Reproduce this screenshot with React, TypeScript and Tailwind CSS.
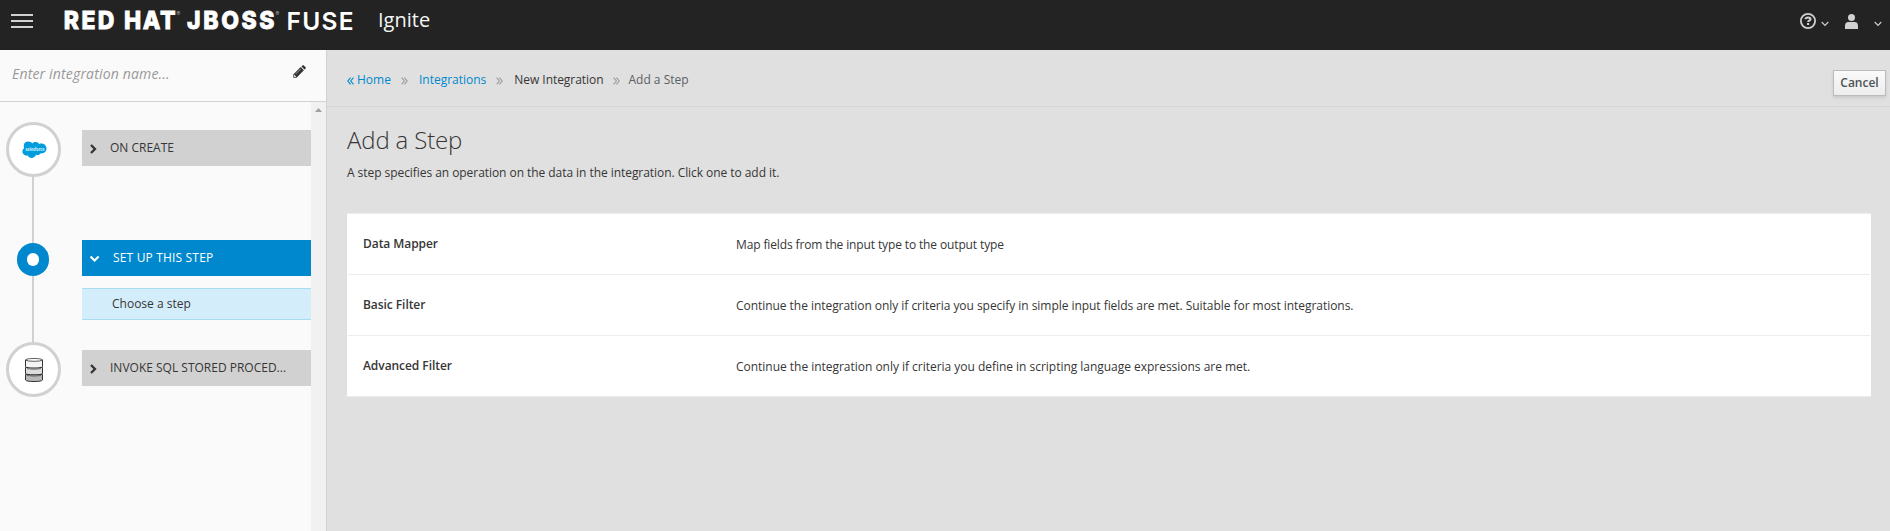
import type { ReactNode } from "react";

function Logo() {
  return (
    <svg className="block overflow-visible" width="300" height="36" viewBox="0 0 300 36" fontFamily="Inter, sans-serif" fill="#fff">
      <g fontSize="25" fontWeight="800" stroke="#fff" strokeWidth="0.8" transform="scale(0.92 1)">
        <text x="2" y="29.5" textLength="55" lengthAdjust="spacing">RED</text>
        <text x="67.5" y="29.5" textLength="56" lengthAdjust="spacing">HAT</text>
        <text x="136" y="29.5" textLength="95" lengthAdjust="spacing">JBOSS</text>
      </g>
      <text x="224.5" y="29.5" fontSize="24.5" fontWeight="600" textLength="67" lengthAdjust="spacing">FUSE</text>
      <text x="114.500" y="15.500" fontSize="5.5" fill="#aaa">®</text>
      <text x="213.500" y="15.500" fontSize="5.5" fill="#aaa">®</text>
    </svg>
  );
}

function Chevron({ className = "", size = "small" }: { className?: string; size?: string }) {
  return size === "small" ? (
    <svg className={className} width="8" height="6" viewBox="0 0 8 6" fill="none" stroke="#d1d1d1" strokeWidth="1.1">
      <path d="M.7 1 4 4.4 7.3 1" />
    </svg>
  ) : (
    <svg className={className} width="8" height="10" viewBox="0 0 8 10" fill="none" stroke="#333" strokeWidth="2.3">
      <path d="M1 1 5 5 1 9" />
    </svg>
  );
}

function DoubleAngle({ back = false, className = "" }: { back?: boolean; className?: string }) {
  return (
    <svg className={className} width="7" height="8" viewBox="0 0 7 8" fill="none" stroke={back ? "#0088ce" : "#9c9c9c"} strokeWidth="1.1">
      {back ? <path d="M3.6.7.8 4l2.8 3.3M6.5.7 3.7 4l2.8 3.3" /> : <path d="M.6.7 3.4 4 .6 7.3M3.4.7 6.2 4 3.4 7.3" />}
    </svg>
  );
}

function Node({ children }: { children: ReactNode }) {
  return (
    <div className="ml-1.5 flex h-[55px] w-[55px] shrink-0 items-center justify-center rounded-full border-3 border-[#d1d1d1] bg-white">
      {children}
    </div>
  );
}

function StepBar({ children }: { children: ReactNode }) {
  return (
    <div className="flex h-9 items-center bg-[#d1d1d1] pl-2">
      <Chevron size="large" className="mt-px" />
      <span className="ml-3 whitespace-nowrap pb-px">{children}</span>
    </div>
  );
}

const steps = [
  { name: "Data Mapper", text: "Map fields from the input type to the output type", tracking: "tracking-[-0.13px]" },
  {
    name: "Basic Filter",
    text: "Continue the integration only if criteria you specify in simple input fields are met. Suitable for most integrations.",
    tracking: "tracking-[-0.046px]",
  },
  {
    name: "Advanced Filter",
    text: "Continue the integration only if criteria you define in scripting language expressions are met.",
    tracking: "tracking-[-0.025px]",
  },
];

export default function App() {
  return (
    <div className="flex h-[531px] w-full flex-col overflow-hidden bg-[#e0e0e0] font-['Open_Sans',sans-serif] text-xs text-[#363636]">
      <header className="flex h-[50px] shrink-0 items-start bg-[#232323]">
        <button className="ml-[11px] mt-3.5 flex h-3.5 w-[22px] flex-col justify-between" aria-label="Menu">
          <span className="h-0.5 w-full bg-[#d1d1d1]" />
          <span className="h-0.5 w-full bg-[#d1d1d1]" />
          <span className="h-0.5 w-full bg-[#d1d1d1]" />
        </button>
        <div className="ml-[29px] w-[300px]"><Logo /></div>
        <span className="ml-4 mt-[6px] text-[20px] leading-7 text-[#f5f5f5]">Ignite</span>
        <div className="ml-auto mr-2 flex items-start">
          <svg className="mt-[13px]" width="16" height="16" viewBox="0 0 16 16" fill="none" stroke="#d1d1d1">
            <circle cx="8" cy="8" r="7.1" strokeWidth="1.8" />
            <path d="M5.4 6.200C5.600 4.900 6.600 4.400 8 4.400c1.500 0 2.500.7 2.500 1.800 0 1.500-2.400 1.400-2.400 2.900" strokeWidth="2" />
            <path d="M8.100 10v2" strokeWidth="2.100" />
          </svg>
          <Chevron className="ml-[5px] mt-[21px]" />
          <svg className="ml-4 mt-3.5" width="13" height="15" viewBox="0 0 13 15" fill="#d1d1d1">
            <circle cx="6.5" cy="3.6" r="3.5" />
            <path d="M0 15v-3c0-2.700 1.300-4 3.300-4h6.400c2 0 3.300 1.300 3.300 4v3z" />
          </svg>
          <Chevron className="ml-4 mt-[21px]" />
        </div>
      </header>

      <div className="flex min-h-0 grow">
        <aside className="flex w-[327px] shrink-0 flex-col border-r border-[#d1d1d1] bg-[#fafafa]">
          <div className="flex h-[52px] shrink-0 items-start justify-between border-b border-[#d1d1d1] pl-3 pr-5">
            <span className="mt-3.5 text-sm leading-5 tracking-[0.17px] italic text-[#999]">Enter integration name...</span>
            <svg className="mt-[15px]" width="13" height="13" viewBox="0 0 13 13" fill="#333">
              <path d="M.3 12.700V9.500L7.700 2.100l3.200 3.200-7.400 7.400zM8.400 1.400 9.400.4q.7-.6 1.400 0l1.800 1.800q.6.7 0 1.400l-1 1z" />
              <path d="M1.300 10v1.700H3zM2.700 9l5-5" stroke="#fafafa" strokeWidth=".5" fill="#fafafa" />
            </svg>
          </div>
          <div className="flex min-h-0 grow">
            <div className="flex w-[82px] shrink-0 flex-col items-start pt-5">
              <Node>
                <svg width="25" height="18" viewBox="0 0 25 18" className="ml-px overflow-visible">
                  <path
                    d="M1.800 4.500C1.800 1.800 4 .5 6.200.5c1.800 0 3.200.7 4.200 1.900C11.500 1.300 12.600.9 13.800 1c1.600.1 2.700.9 3.300 2 3.400-1.300 7.400.9 7.400 4.600 0 3.500-3.200 5.500-6.200 4.800-.9 1.600-2.700 2-4.200 1.400-.7 2-2.600 3.200-4.600 3.200-1.700 0-3-.8-3.800-2.400C3.200 15.100.4 13.500.4 10.600.4 9.100 1.100 7.900 2.100 7.200 1.800 6.300 1.700 5.400 1.800 4.500Z"
                    fill="#009ddc"
                  />
                  <text x="3.500" y="10" fontSize="5" fontWeight="700" fill="#d7f1fb" textLength="19" lengthAdjust="spacingAndGlyphs">salesforce</text>
                </svg>
              </Node>
              <div className="ml-8 h-[66px] w-0.5 bg-[#d1d1d1]" />
              <div className="ml-[17px] flex h-[33px] w-8 items-center justify-center rounded-full bg-[#0088ce]">
                <div className="h-[13px] w-3 rounded-full bg-white" />
              </div>
              <div className="ml-8 h-[66px] w-0.5 bg-[#d1d1d1]" />
              <Node>
                <svg width="18" height="24" viewBox="0 0 18 24" stroke="#333" strokeWidth="1" className="ml-px">
                  <path d="M.5 16.500v5.500q1 1.500 8.500 1.500t8.500-1.500v-5.500z" fill="#b8b8b8" />
                  <path d="M.5 9.500v6q1 1.300 8.500 1.300t8.500-1.300v-6z" fill="#ddd" />
                  <path d="M.5 2v6.700q1 1.300 8.500 1.300t8.500-1.300V2z" fill="#f4f4f4" />
                  <path d="M.5 2Q1.500.5 9 .5T17.500 2Q16 3.300 9 3.300T.5 2Z" fill="#fff" strokeWidth=".8" />
                  <path d="M2 10.700q7 1.200 14 0M2 17.500q7 1.200 14 0" fill="none" strokeWidth=".6" />
                </svg>
              </Node>
            </div>
            <div className="min-w-0 grow pt-7">
              <StepBar>ON CREATE</StepBar>
              <div className="mt-[74px] flex h-9 items-center bg-[#0088ce] pl-2 text-white">
                <svg width="10" height="8" viewBox="0 0 10 8" fill="none" stroke="#fff" strokeWidth="2.1" className="mt-0.5">
                  <path d="m.6 1.500 4 4 4-4" />
                </svg>
                <span className="ml-[13px] pb-px tracking-[0.17px]">SET UP THIS STEP</span>
              </div>
              <div className="mt-3 flex h-8 items-center border-y border-[#a7dcf3] bg-[#d4edfa] pl-[30px]">Choose a step</div>
              <div className="h-[30px]" />
              <StepBar>INVOKE SQL STORED PROCED...</StepBar>
            </div>
            <div className="flex w-[15px] shrink-0 justify-center bg-[#f1f1f1] pt-1.5">
              <svg width="7" height="4" viewBox="0 0 7 4" fill="#a0a0a0"><path d="M0 4 3.500 0 7 4z" /></svg>
            </div>
          </div>
        </aside>

        <main className="min-w-0 grow">
          <div className="flex h-[57px] items-start border-b border-[#d6d6d6] pl-5 pr-1">
            <nav className="mt-5 flex h-5 items-center whitespace-nowrap">
              <DoubleAngle back className="mt-px" />
              <a className="ml-[3px] text-[#0088ce]">Home</a>
              <DoubleAngle className="ml-[10px] mt-px" />
              <a className="ml-[11px] text-[#0088ce]">Integrations</a>
              <DoubleAngle className="ml-[10px] mt-px" />
              <a className="ml-[11px] tracking-[-0.05px]">New Integration</a>
              <DoubleAngle className="ml-[10px] mt-px" />
              <span className="ml-2 text-[#5c5f62]">Add a Step</span>
            </nav>
            <button className="ml-auto mt-5 h-[26px] w-[53px] border border-[#bbb] bg-linear-to-b from-[#fafafa] to-[#ededed] text-xs font-semibold text-[#4d5258] shadow-[0_2px_3px_rgba(3,3,3,0.1)]">
              Cancel
            </button>
          </div>
          <div className="pl-5 pr-[19px]">
            <h1 className="pt-[20px] text-2xl leading-[26px] font-light tracking-[-0.15px]">Add a Step</h1>
            <p className="mt-[10px] leading-5 tracking-[-0.055px]">A step specifies an operation on the data in the integration. Click one to add it.</p>
            <div className="mt-[30px] border-y border-[#ededed] bg-white px-px">
              {steps.map((s) => (
                <div key={s.name} className="flex h-[61px] items-center border-b border-[#ededed] pl-[15px] last:h-[60px] last:border-b-0">
                  <span className="w-[373px] shrink-0 pb-px font-semibold tracking-[-0.06px]">{s.name}</span>
                  <span className={"pt-px " + s.tracking}>{s.text}</span>
                </div>
              ))}
            </div>
          </div>
        </main>
      </div>
    </div>
  );
}
